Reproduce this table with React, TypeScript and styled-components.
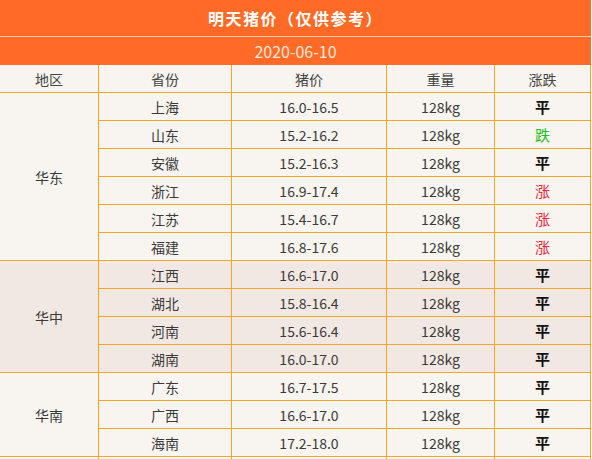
import React from "react";
import styled, { createGlobalStyle } from "styled-components";

const GlobalStyle = createGlobalStyle`
  html, body {
    margin: 0;
    padding: 0;
    background: #ffffff;
    overflow: hidden;
  }
  body {
    width: 592px;
    height: 459px;
    font-family: "Noto Sans CJK SC", "Open Sans", sans-serif;
  }
`;

const Wrapper = styled.div`
  width: 592px;
  height: 459px;
  overflow: hidden;
`;

const Panel = styled.div`
  width: 591px;
`;

const TitleBar = styled.div`
  height: 36px;
  background: #ff6a27;
  border-bottom: 1px solid #f6c8b2;
  color: #ffffff;
  font-size: 16px;
  font-weight: 700;
  display: flex;
  align-items: center;
  justify-content: center;
  letter-spacing: 1.5px;
`;

const DateBar = styled.div`
  height: 28px;
  background: #ff6a27;
  color: #fde8dc;
  font-size: 16px;
  display: flex;
  align-items: center;
  justify-content: center;
`;

const Table = styled.table`
  border-collapse: separate;
  border-spacing: 0;
  table-layout: fixed;
  width: 591px;
  font-size: 14px;
  color: #3a3a3a;
`;

const HeadCell = styled.th`
  box-sizing: border-box;
  height: 28px;
  padding: 0;
  font-weight: 400;
  background: #f8f4f0;
  border-right: 1px solid #f5a623;
  border-bottom: 1px solid #f5a623;
  text-align: center;
  color: #444;
`;

const Cell = styled.td<{ $tone: "light" | "warm" }>`
  box-sizing: border-box;
  height: 28px;
  padding: 0;
  text-align: center;
  border-right: 1px solid #f5a623;
  border-bottom: 1px solid #f5a623;
  background: ${(p) => (p.$tone === "warm" ? "#f2e8e3" : "#f8f4f0")};
`;

const Trend = styled.span<{ $kind: "平" | "涨" | "跌" }>`
  font-size: 15px;
  font-weight: ${(p) => (p.$kind === "平" ? 700 : 400)};
  color: ${(p) =>
    p.$kind === "平" ? "#111111" : p.$kind === "涨" ? "#e8253c" : "#22c022"};
`;

type Row = { province: string; price: string; trend: "平" | "涨" | "跌" };
type Group = { region: string; tone: "light" | "warm"; rows: Row[] };

const groups: Group[] = [
  {
    region: "华东",
    tone: "light",
    rows: [
      { province: "上海", price: "16.0-16.5", trend: "平" },
      { province: "山东", price: "15.2-16.2", trend: "跌" },
      { province: "安徽", price: "15.2-16.3", trend: "平" },
      { province: "浙江", price: "16.9-17.4", trend: "涨" },
      { province: "江苏", price: "15.4-16.7", trend: "涨" },
      { province: "福建", price: "16.8-17.6", trend: "涨" },
    ],
  },
  {
    region: "华中",
    tone: "warm",
    rows: [
      { province: "江西", price: "16.6-17.0", trend: "平" },
      { province: "湖北", price: "15.8-16.4", trend: "平" },
      { province: "河南", price: "15.6-16.4", trend: "平" },
      { province: "湖南", price: "16.0-17.0", trend: "平" },
    ],
  },
  {
    region: "华南",
    tone: "light",
    rows: [
      { province: "广东", price: "16.7-17.5", trend: "平" },
      { province: "广西", price: "16.6-17.0", trend: "平" },
      { province: "海南", price: "17.2-18.0", trend: "平" },
    ],
  },
];

const widths = [99, 133, 155, 108, 96];

export default function App() {
  return (
    <Wrapper>
      <GlobalStyle />
      <Panel>
        <TitleBar>明天猪价（仅供参考）</TitleBar>
        <DateBar>2020-06-10</DateBar>
      </Panel>
      <Table>
        <colgroup>
          {widths.map((w, i) => (
            <col key={i} style={{ width: w }} />
          ))}
        </colgroup>
        <thead>
          <tr>
            <HeadCell>地区</HeadCell>
            <HeadCell>省份</HeadCell>
            <HeadCell>猪价</HeadCell>
            <HeadCell>重量</HeadCell>
            <HeadCell>涨跌</HeadCell>
          </tr>
        </thead>
        <tbody>
          {groups.map((g) =>
            g.rows.map((r, i) => (
              <tr key={g.region + r.province}>
                {i === 0 && (
                  <Cell $tone={g.tone} rowSpan={g.rows.length}>
                    {g.region}
                  </Cell>
                )}
                <Cell $tone={g.tone}>{r.province}</Cell>
                <Cell $tone={g.tone}>{r.price}</Cell>
                <Cell $tone={g.tone}>128kg</Cell>
                <Cell $tone={g.tone}>
                  <Trend $kind={r.trend}>{r.trend}</Trend>
                </Cell>
              </tr>
            ))
          )}
          <tr>
            <Cell $tone="light">&nbsp;</Cell>
            <Cell $tone="light">&nbsp;</Cell>
            <Cell $tone="light">&nbsp;</Cell>
            <Cell $tone="light">&nbsp;</Cell>
            <Cell $tone="light">&nbsp;</Cell>
          </tr>
        </tbody>
      </Table>
    </Wrapper>
  );
}
